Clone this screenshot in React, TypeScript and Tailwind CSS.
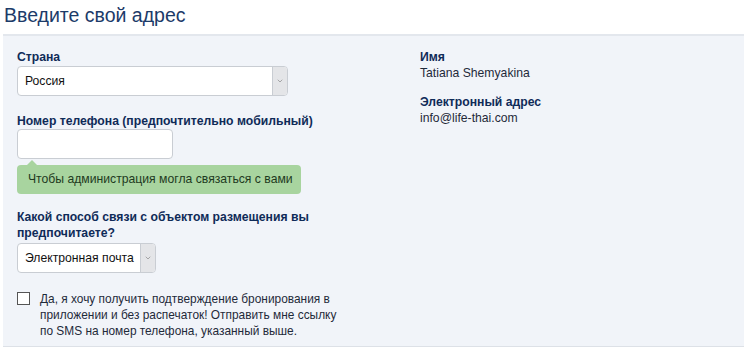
import { ChevronDown } from 'lucide-react';

const font = { fontFamily: '"Liberation Sans", Arial, sans-serif' };

function Select({ value, width }: { value: string; width: string }) {
  return (
    <div className={`flex h-[30px] ${width} rounded-[4px] border border-[#c9cdd3] bg-white overflow-hidden`}>
      <div className="flex-1 flex items-center pl-[7px] text-[12.2px] text-[#111] whitespace-nowrap">{value}</div>
      <div className="w-[15px] flex items-center justify-center border-l border-[#c9cdd3] bg-[#e4e5e8]">
        <ChevronDown size={8} strokeWidth={1.75} className="text-[#777]" />
      </div>
    </div>
  );
}

export default function App() {
  return (
    <div className="w-[749px] h-[351px] bg-white overflow-hidden" style={font}>
      <h1 className="pl-[4px] pt-[4px] h-[34px] text-[19.5px] leading-[23px] text-[#1c3b69]">Введите свой адрес</h1>
      <div className="ml-[3px] w-[741px] h-[313px] border-t-2 border-[#e3e7ed] border-b border-b-[#dde1e7] bg-[#f1f4f9] flex">
        <div className="w-[402px] pl-[14px] pt-[13px]">
          <div className="text-[12.2px] font-bold text-[#0f2b58] leading-[16px] mb-[1px]">Страна</div>
          <Select value="Россия" width="w-[271px]" />

          <div className="mt-[17px] text-[12.2px] font-bold text-[#0f2b58] leading-[16px]">
            Номер телефона (предпочтительно мобильный)
          </div>
          <div className="h-[30px] w-[156px] rounded-[4px] border border-[#c9cdd3] bg-white" />
          <div className="relative mt-[6px] w-[284px] h-[29px] rounded-[4px] bg-[#a8d49f] flex items-center pl-[11px] text-[12.2px] text-[#1e3a1e]">
            <span className="absolute -top-[5px] left-[10px] w-0 h-0 border-l-[5px] border-r-[5px] border-b-[5px] border-l-transparent border-r-transparent border-b-[#a8d49f]" />
            Чтобы администрация могла связаться с вами
          </div>

          <div className="mt-[15px] w-[300px] text-[12.2px] font-bold text-[#0f2b58] leading-[16px] mb-[2px]">
            Какой способ связи с объектом размещения вы предпочитаете?
          </div>
          <Select value="Электронная почта" width="w-[139px]" />

          <div className="mt-[18px] flex gap-[10px]">
            <div className="mt-[1px] w-[13px] h-[13px] border border-[#555] bg-white shrink-0" />
            <p className="w-[306px] text-[11.9px] leading-[16px] text-[#1f2a3a]">
              Да, я хочу получить подтверждение бронирования в приложении и без распечаток! Отправить мне ссылку по SMS на номер телефона, указанный выше.
            </p>
          </div>
        </div>

        <div className="pt-[13px] pl-[15px]">
          <div className="text-[12.2px] font-bold text-[#0f2b58] leading-[16px]">Имя</div>
          <div className="text-[12.2px] text-[#1f2a3a] leading-[16px]">Tatiana Shemyakina</div>
          <div className="mt-[13px] text-[12.2px] font-bold text-[#0f2b58] leading-[16px]">Электронный адрес</div>
          <div className="text-[12.2px] text-[#1f2a3a] leading-[16px]">info@life-thai.com</div>
        </div>
      </div>
    </div>
  );
}
